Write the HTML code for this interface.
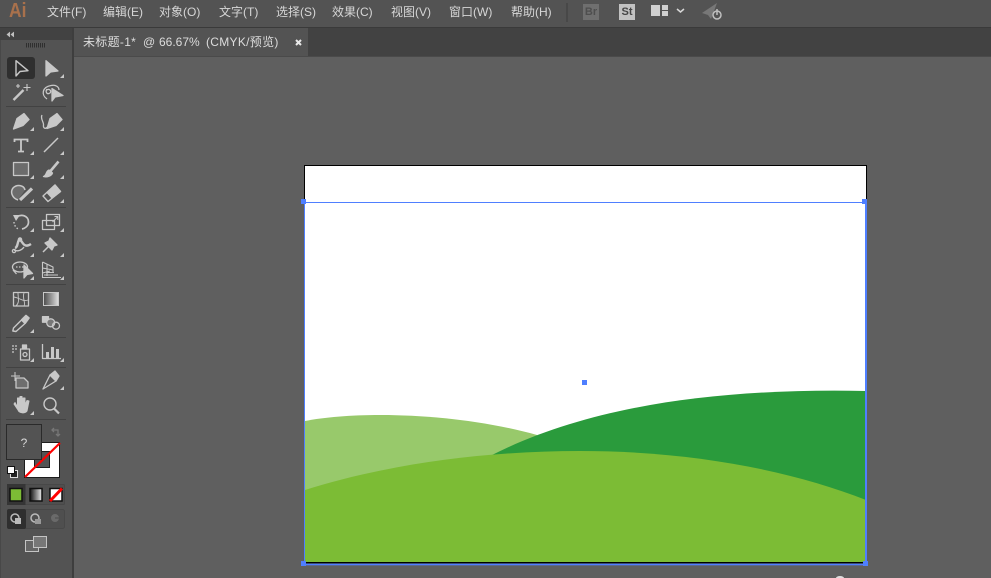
<!DOCTYPE html>
<html><head><meta charset="utf-8">
<style>
html,body{margin:0;padding:0;background:#5f5f5f;}
#r{position:relative;width:991px;height:578px;overflow:hidden;background:#5f5f5f;font-family:"Liberation Sans","Noto Sans CJK SC",sans-serif;}
.a{position:absolute;}
.m{position:absolute;top:4px;font-size:12px;line-height:16px;color:#d6d6d6;white-space:nowrap;}
.t{position:absolute;top:34px;font-size:12px;line-height:16px;color:#dcdcdc;white-space:nowrap;}
svg{position:absolute;left:0;top:0;}
</style></head><body><div id="r">
<div class="a" style="left:0;top:0;width:991px;height:27px;background:#535353"></div>
<div class="a" style="left:0;top:27px;width:991px;height:29px;background:#424242;border-top:1px solid #3a3a3a;box-sizing:border-box"></div>
<div class="a" style="left:0;top:56px;width:991px;height:1px;background:#4a4a4a"></div>
<div class="a" style="left:9px;top:-2px;font-size:20px;line-height:26px;font-weight:bold;color:#a9714c;transform:scaleX(.87);transform-origin:0 0">Ai</div>
<div class="m" style="left:47px">文件(F)</div>
<div class="m" style="left:103px">编辑(E)</div>
<div class="m" style="left:159px">对象(O)</div>
<div class="m" style="left:219px">文字(T)</div>
<div class="m" style="left:276px">选择(S)</div>
<div class="m" style="left:332px">效果(C)</div>
<div class="m" style="left:391px">视图(V)</div>
<div class="m" style="left:449px">窗口(W)</div>
<div class="m" style="left:511px">帮助(H)</div>
<div class="a" style="left:566px;top:3px;width:2px;height:19px;background:#484848"></div>
<div class="a" style="left:583px;top:4px;width:16px;height:16px;background:#6f6f6f;color:#4e4e4e;font-size:11px;font-weight:bold;line-height:17px;text-align:center">Br</div>
<div class="a" style="left:619px;top:4px;width:16px;height:16px;background:#c2c2c2;color:#454545;font-size:11px;font-weight:bold;line-height:17px;text-align:center">St</div>
<!-- tab -->
<div class="a" style="left:73px;top:28px;width:235px;height:28px;background:#535353"></div>
<div class="t" style="left:83px;letter-spacing:.3px">未标题-1*</div>
<div class="t" style="left:143px">@</div>
<div class="t" style="left:159px">66.67%</div>
<div class="t" style="left:206px;letter-spacing:.3px">(CMYK/预览)</div>
<!-- toolbar -->
<div class="a" style="left:0;top:28px;width:72px;height:550px;background:#535353"></div>
<div class="a" style="left:0;top:28px;width:72px;height:12px;background:#424242"></div>
<div class="a" style="left:72px;top:28px;width:2px;height:550px;background:#3e3e3e"></div>
<div class="a" style="left:0;top:40px;width:1px;height:538px;background:#484848"></div>
<div class="a" style="left:7px;top:57px;width:28px;height:22px;background:#2f2f2f;border-radius:3px"></div>
<!-- Artboard -->
<div class="a" style="left:304px;top:165px;width:563px;height:398px;background:#fff;border:1px solid #000;box-sizing:border-box"></div>
<svg width="991" height="578" viewBox="0 0 991 578" fill="none">
<!-- hills -->
<path d="M305 421C355 411 455 412 537 435L537 480L305 500Z" fill="#98c96b"/>
<path d="M490 456C590 405 720 388 866 391L866 510L490 510Z" fill="#2a9b3c"/>
<path d="M305 490C390 463 490 451 580 451C690 451 790 470 866 500L866 562L305 562Z" fill="#7cbc35"/>
<rect x="304" y="562" width="562" height="1.300" fill="#000"/>
<!-- selection -->
<rect x="304" y="202" width="562" height="1" fill="#4f7fff"/>
<rect x="304" y="202" width="1" height="362" fill="#4f7fff"/>
<rect x="304" y="563.700" width="562" height="1.600" fill="#4f7fff"/>
<rect x="865" y="202" width="2" height="363" fill="#4f7fff"/>
<g fill="#4f7fff">
<rect x="301" y="199" width="5" height="5"/><rect x="862" y="199" width="5" height="5"/>
<rect x="301" y="561" width="5" height="5"/><rect x="863" y="561" width="5" height="5"/>
<rect x="582" y="380" width="5" height="5"/>
</g>
<ellipse cx="840" cy="578" rx="4" ry="2" fill="#ddd"/>
<!-- tab close -->
<path d="M296 40L301 45M301 40L296 45" stroke="#e8e8e8" stroke-width="2"/>
<!-- workspace icons -->
<g fill="#d0d0d0"><rect x="651" y="5" width="9" height="11"/><rect x="662" y="5" width="6" height="5"/><rect x="662" y="11" width="6" height="5"/></g>
<path d="M677 9L680.500 12L684 9" stroke="#d8d8d8" stroke-width="1.500"/>
<path d="M702 13L717 3L711 19L708 15Z" fill="#777"/>
<circle cx="717" cy="15" r="4" fill="#535353" stroke="#c0c0c0" stroke-width="1.500"/><path d="M717 9V15" stroke="#c0c0c0" stroke-width="1.500"/>
<!-- collapse arrows -->
<path d="M10 32L7 34.500L10 37M14 32L11 34.500L14 37" fill="#c0c0c0" stroke="#c0c0c0" stroke-width=".6"/>
<path d="M26.500 43V47.500M28.500 43V47.500M30.500 43V47.500M32.500 43V47.500M34.500 43V47.500M36.500 43V47.500M38.500 43V47.500M40.500 43V47.500M42.500 43V47.500M44.500 43V47.500" stroke="#2f2f2f" stroke-width="1"/>
<!-- separators -->
<g fill="#424242">
<rect x="6" y="106" width="60" height="1"/><rect x="6" y="207" width="60" height="1"/>
<rect x="6" y="284" width="60" height="1"/><rect x="6" y="337" width="60" height="1"/>
<rect x="6" y="367" width="60" height="1"/><rect x="6" y="419" width="60" height="1"/>
</g>
<g stroke="#c8c8c8" fill="none" stroke-width="1.300" stroke-linejoin="round">
<!-- selection -->
<path d="M16 60.700V76L20 71.500L28 70.700Z" stroke-width="1.400"/>
<path d="M46 60.700V76L50.500 72L58 71Z" fill="#c8c8c8"/>
<!-- wand -->
<path d="M13.500 100L23.500 90" stroke-width="2.400"/>
<path d="M27 84V91M23.500 87.500H30.500M18 84V88M16 86H20" stroke-width="1.100"/>
<!-- lasso -->
<path d="M47 99C41 95 42 87 51 85.500C56 84.500 59 87 59 90"/><path d="M47 89C45 92 47 95 50 93C52 91 49 88 47 90"/>
<path d="M52 88.500V101L55 97L63 95.500Z" fill="#c8c8c8"/>
<!-- pen -->
<path d="M13.500 129L17 118.500L24 113.500L29 119.500L23 125.500Z" fill="#c8c8c8"/>
<path d="M42 115C40 119 44 122 43.500 125C43 129 46 129 47 127" />
<path d="M47 128.500L50 118.500L57 113.500L62 119.500L56 125.500Z" fill="#c8c8c8"/>
<!-- T -->
<path d="M14.500 142V139.500H27.500V142M21 139.500V151.500M18 151.500H24" stroke-width="1.800" stroke-linejoin="miter"/>
<!-- line -->
<path d="M44 152L58 138" stroke-width="1.500"/>
<!-- rect -->
<rect x="13.500" y="162.500" width="15" height="13" fill="#6c6c6c" stroke-width="1.300"/>
<!-- brush -->
<path d="M43.500 176.500C47 175.500 45.500 171 49 170L52.500 173C51.500 176 47 177.500 43.500 176.500Z" fill="#c8c8c8"/><path d="M50.500 171L58.500 161.500" stroke-width="2.600"/>
<!-- blob -->
<path d="M18 200C12 198 10 192 13 188C17 184 24 185 25 190" fill="#6c6c6c" stroke-width="1.500"/>
<path d="M20 200L32 188.500" stroke-width="3.200"/>
<!-- eraser -->
<path d="M43 196L55 185L60.500 191.500L48 201.500Z" stroke-width="1.400"/>
<path d="M47 192.500L55 185L60.500 191.500L52 198Z" fill="#c8c8c8"/>
<!-- rotate -->
<path d="M16 217C22 213.500 28.500 216 28.500 222C28.500 226 25 228.500 22 229" stroke-width="1.700"/>
<path d="M14 222C14 225 16 228 19 229.500" stroke-dasharray="1.500 1.800" stroke-width="1.400"/>
<path d="M13 215L16 221L20 215Z" fill="#c8c8c8" stroke="none"/>
<!-- scale -->
<rect x="46.500" y="214.500" width="13" height="11"/><rect x="42.500" y="220.500" width="12" height="9" />
<path d="M52.500 222L57.500 217M54.500 216.500H57.800V220" stroke-width="1"/>
<!-- warp -->
<path d="M15 248C18.500 247 17 240 20 239C23 244 25 248 31 244" stroke-width="2.400"/>
<path d="M14 250C18 252 22 250 24 247" stroke-width="1.300"/>
<circle cx="14" cy="251" r="1.600"/><circle cx="20" cy="239.500" r="1.600"/>
<!-- pin -->
<path d="M43 252L49 246" stroke-width="1.500"/><path d="M50 238L57 245L54 246L52 250L45 243L49 241Z" fill="#c8c8c8"/>
<!-- free transform -->
<ellipse cx="20" cy="267" rx="7.500" ry="5"/><path d="M13 270L16.500 274" /><path d="M16 267H24" stroke-dasharray="1.500 1.500"/>
<path d="M24 265V278L27 274.500L32.500 273.500Z" fill="#c8c8c8"/>
<!-- perspective -->
<path d="M42.500 262V278M42.500 262L53 267V272M47 264V276M42.500 268L53 270M42.500 273L50 271" stroke-width="1.100"/>
<path d="M46 272.500H54M44 275H58M42.500 277.500H61" stroke-width="1"/>
<!-- mesh -->
<rect x="13.500" y="292.500" width="15" height="13.500"/>
<path d="M14 297C20 298 23 302 28 300M18 293C18 298 20 302 16 306M24 293C22 298 26 303 24 306" stroke-width=".9"/>
</g>
<defs><linearGradient id="g" x1="0" x2="1" y1="0" y2="0"><stop offset="0" stop-color="#4a4a4a"/><stop offset="1" stop-color="#e0e0e0"/></linearGradient>
<linearGradient id="g2" x1="0" x2="1" y1="0" y2="0"><stop offset="0" stop-color="#111"/><stop offset="1" stop-color="#eee"/></linearGradient></defs>
<rect x="43.500" y="292.500" width="15" height="13" fill="url(#g)" stroke="#c8c8c8"/>
<g stroke="#c8c8c8" fill="none" stroke-width="1.300" stroke-linejoin="round">
<!-- eyedropper -->
<path d="M12.800 331L13.500 328L21.500 320L25 323.500L16 331.500Z" stroke-width="1.400"/><path d="M21.500 320L26 315.500L29 318L25 323.500" fill="#c8c8c8" stroke-width="1.600"/>
<!-- blend -->
<rect x="42.500" y="316.700" width="6" height="5.500" fill="#c8c8c8"/>
<circle cx="50.700" cy="322.800" r="4" fill="#777"/><circle cx="56" cy="325.700" r="3.500"/>
<!-- symbol spray -->
<rect x="20.500" y="349" width="9" height="11" stroke-width="1.300"/><circle cx="25" cy="354.500" r="2"/>
<rect x="22.500" y="345" width="4" height="4" fill="#c8c8c8"/>
<path d="M12 346H14M15 346H17M12 349H14M15 349H17M12 352H14" stroke-width="1.300"/>
<!-- graph -->
<path d="M42.500 344V358.500H61"/>
<rect x="46" y="352" width="3" height="6" fill="#c8c8c8" stroke="none"/>
<rect x="51" y="347" width="3" height="11" fill="#c8c8c8" stroke="none"/>
<rect x="56" y="349" width="3" height="9" fill="#c8c8c8" stroke="none"/>
<!-- artboard -->
<path d="M11 376H20M15 372V381" stroke-width="1"/>
<path d="M16 378H24L28 382V388H16Z" fill="#6e6e6e"/>
<!-- slice -->
<path d="M43 389L50 375L56 381Z"/><path d="M50 375L55 371L59 376L56 381Z" fill="#c8c8c8"/>
<!-- hand -->
<path d="M14 404L18 410C19 413 25 414 27 411L29 401L27 400.500L25 405V398L23 398L22 404V396.500L20 396.500L19.500 404V398L17.500 398V407L15 402.500Z" fill="#c8c8c8" stroke-width="1"/>
<!-- zoom -->
<circle cx="50" cy="404" r="6" stroke-width="1.400"/><path d="M54 408.500L59 413.500" stroke-width="2.200"/>
</g>
<!-- small corner triangles -->
<g fill="#c8c8c8">
<path d="M64 78v-4l-4 4z M34 131v-4l-4 4z M64 131v-4l-4 4z M34 155v-4l-4 4z M64 155v-4l-4 4z M34 179v-4l-4 4z M64 179v-4l-4 4z M34 203v-4l-4 4z M64 203v-4l-4 4z M34 232v-4l-4 4z M64 232v-4l-4 4z M34 257v-4l-4 4z M64 257v-4l-4 4z M34 280v-4l-4 4z M64 280v-4l-4 4z M34 333v-4l-4 4z M34 362v-4l-4 4z M64 362v-4l-4 4z M64 390v-4l-4 4z M34 415v-4l-4 4z"/>
</g>
<!-- fill / stroke -->
<rect x="24.500" y="442.500" width="35" height="35" fill="#fff" stroke="#1d1d1d"/>
<rect x="34.500" y="451.500" width="15" height="16" fill="#535353" stroke="#1d1d1d"/>
<path d="M25 477L60 443" stroke="#f00" stroke-width="2.200"/>
<rect x="6.500" y="424.500" width="35" height="35" fill="#535353" stroke="#2a2a2a"/>
<text x="24" y="447" font-family="Liberation Sans" font-size="12" fill="#d8d8d8" text-anchor="middle">?</text>
<path d="M54 428L52 430L54 432M52 430H58V436M56 434L58 436L60 434" stroke="#777" stroke-width="1.300"/>
<rect x="10.500" y="470.500" width="7" height="7" fill="#222" stroke="#ddd"/>
<rect x="7.500" y="466.500" width="7" height="7" fill="#fff" stroke="#111"/>
<!-- color mode -->
<rect x="7.500" y="484.500" width="57" height="20" rx="1" fill="#4f4f4f" stroke="#484848"/>
<rect x="7" y="484" width="18.500" height="21" fill="#353535"/>
<rect x="10" y="488.500" width="12" height="12.500" fill="#7cbc35" stroke="#111" stroke-width="1.500"/>
<rect x="30" y="488.500" width="12" height="12.500" fill="url(#g2)" stroke="#111" stroke-width="1.500"/>
<rect x="50" y="488.500" width="12" height="12.500" fill="#fff" stroke="#111" stroke-width="1.500"/>
<path d="M50 501L62 488.500" stroke="#f00" stroke-width="3"/>
<!-- draw mode -->
<rect x="7.500" y="509.500" width="57" height="19" rx="2" fill="#4f4f4f" stroke="#484848"/>
<rect x="7" y="509" width="19" height="20" rx="2" fill="#2f2f2f"/>
<circle cx="15" cy="518" r="4" fill="none" stroke="#bbb" stroke-width="1.500"/><rect x="15" y="518" width="6" height="6" fill="#bbb"/>
<circle cx="35" cy="518" r="4" fill="none" stroke="#bbb" stroke-width="1.500"/><rect x="35" y="519" width="6" height="5" fill="#999"/>
<circle cx="55" cy="518" r="3.500" fill="#6a6a6a" stroke="#6a6a6a"/><path d="M55 518h4" stroke="#4c4c4c"/>
<!-- screen mode -->
<rect x="25.500" y="540.500" width="13" height="11" fill="#666" stroke="#c4c4c4"/>
<rect x="33.500" y="536.500" width="13" height="11" fill="#777" stroke="#c4c4c4"/>
</svg>
</div></body></html>
